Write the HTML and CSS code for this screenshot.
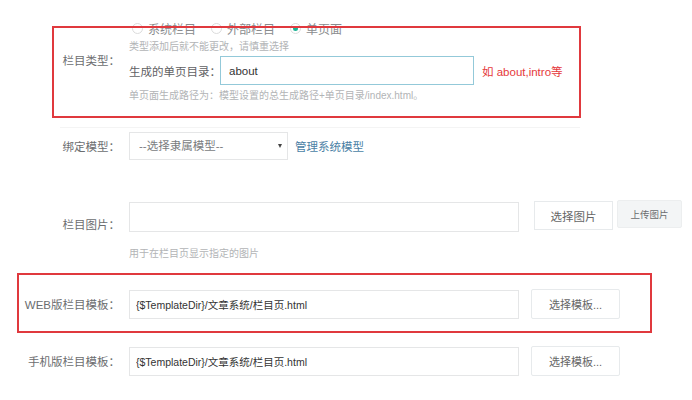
FILE: index.html
```html
<!DOCTYPE html>
<html lang="zh-CN">
<head>
    <meta charset="UTF-8">
    <title>栏目设置</title>
    <link rel="stylesheet" href="styles.css">
</head>
<body>
    <div class="page">
        <form class="col-form">
            <div class="row row-type">
                <label class="row-label">栏目类型<span class="colon">：</span></label>
                <div class="row-body">
                    <div class="radio-line">
                        <span class="radio"><i class="dot"></i>系统栏目</span>
                        <span class="radio"><i class="dot"></i>外部栏目</span>
                        <span class="radio"><i class="dot on"></i>单页面</span>
                    </div>
                    <div class="hint">类型添加后就不能更改，请慎重选择</div>
                    <div class="sub-row">
                        <span class="sub-label">生成的单页目录<span class="colon">：</span></span>
                        <input type="text" class="field field-focus" value="about">
                        <span class="red-note">如 about,intro等</span>
                    </div>
                    <div class="hint">单页面生成路径为<span class="colon">：</span>模型设置的总生成路径+单页目录/index.html。</div>
                </div>
            </div>

            <div class="line-dashed"></div>

            <div class="row row-model">
                <label class="row-label">绑定模型<span class="colon">：</span></label>
                <div class="select-wrap">
                    <select class="select">
                        <option>--选择隶属模型--</option>
                    </select>
                </div>
                <a class="link" href="#">管理系统模型</a>
            </div>

            <div class="row row-pic">
                <label class="row-label low">栏目图片<span class="colon">：</span></label>
                <input type="text" class="field field-wide">
                <button type="button" class="btn btn-pick">选择图片</button>
                <button type="button" class="btn btn-upload">上传图片</button>
            </div>
            <div class="hint hint-pic">用于在栏目页显示指定的图片</div>

            <div class="row row-tpl">
                <label class="row-label">WEB版栏目模板<span class="colon">：</span></label>
                <input type="text" class="field field-wide" value="{$TemplateDir}/文章系统/栏目页.html">
                <button type="button" class="btn btn-tpl">选择模板...</button>
            </div>

            <div class="row row-tpl row-mobile">
                <label class="row-label">手机版栏目模板<span class="colon">：</span></label>
                <input type="text" class="field field-wide" value="{$TemplateDir}/文章系统/栏目页.html">
                <button type="button" class="btn btn-tpl">选择模板...</button>
            </div>
        </form>

        <!-- 标注框 -->
        <div class="mark mark-type"></div>
        <div class="mark mark-web"></div>
    </div>
</body>
</html>
```

FILE: styles.css
```css
body {
    margin: 0;
    font-family: "Liberation Sans", "Noto Sans CJK SC", sans-serif;
    font-size: 11.5px;
    color: #676a6c;
    background-color: white;
}

.page {
    position: relative;
    width: 692px;
    height: 400px;
    overflow: hidden;
}

/* 冒号居中显示 */
.colon {
    font-family: "Noto Sans CJK TC", sans-serif;
}

.row {
    display: flex;
    align-items: center;
}

.row-label {
    width: 129px;
    padding-right: 9px;
    box-sizing: border-box;
    text-align: right;
    white-space: nowrap;
    color: #6b6d6f;
    line-height: 16px;
}

.row-label.low {
    margin-top: 16px;
}

.row-body {
    display: flex;
    flex-direction: column;
}

.row-type {
    padding-top: 18px;
}

.radio-line {
    display: flex;
    align-items: center;
    height: 20px;
    margin-left: 3px;
    color: #8a8c8e;
    font-size: 12px;
}

.radio {
    display: flex;
    align-items: center;
    margin-right: 15px;
}

.dot {
    width: 9px;
    height: 9px;
    border: 1px solid #dcdcdc;
    border-radius: 50%;
    margin-right: 5px;
    position: relative;
}

.dot.on::after {
    content: "";
    position: absolute;
    left: 2px;
    top: 2px;
    width: 5px;
    height: 5px;
    border-radius: 50%;
    background-color: #1ab394;
}

.hint {
    font-size: 10px;
    line-height: 14px;
    color: #b2b4b6;
    margin-top: 2px;
}

.sub-row {
    display: flex;
    align-items: center;
    margin-top: 2px;
}

.sub-row + .hint {
    margin-top: 3px;
}

.sub-label {
    width: 91px;
    white-space: nowrap;
    color: #5f6163;
}

.field {
    display: block;
    height: 29px;
    box-sizing: border-box;
    border: 1px solid #e5e6e7;
    padding: 0 6px;
    font-family: inherit;
    font-size: 10.5px;
    color: #333;
    outline: none;
}

.field-focus {
    width: 254px;
    border-color: #93c9d9;
    font-size: 11.5px;
    padding-left: 8px;
}

.red-note {
    margin-left: 8px;
    color: #e5383b;
}

.line-dashed {
    height: 0;
    border-top: 1px solid #f4f4f4;
    margin: 24px 0 0 60px;
    width: 520px;
}

.row-model {
    margin-top: 4px;
}

.select-wrap {
    position: relative;
}

.select-wrap::after {
    content: "";
    position: absolute;
    right: 6px;
    top: 12px;
    border-left: 2.5px solid transparent;
    border-right: 2.5px solid transparent;
    border-top: 4px solid #444;
}

.select {
    display: block;
    -webkit-appearance: none;
    appearance: none;
    width: 159px;
    height: 28px;
    margin: 0;
    border: 1px solid #e5e6e7;
    background-color: white;
    padding: 0 9px;
    font-family: inherit;
    font-size: 11.5px;
    color: #7a7c7e;
    border-radius: 0;
}

.link {
    margin-left: 7px;
    color: #4a7fa5;
    text-decoration: none;
}

.row-pic {
    margin-top: 40px;
}

.field-wide {
    width: 390px;
    height: 30px;
}

.btn {
    display: block;
    font-family: inherit;
    border: 1px solid #e7eaec;
    background-color: white;
    color: #666;
    cursor: pointer;
    padding: 0;
    margin-top: 0;
    margin-bottom: 0;
}

.btn-pick {
    width: 79px;
    height: 29px;
    margin-left: 15px;
    margin-top: -2px;
    font-size: 11.5px;
}

.btn-upload {
    width: 65px;
    height: 28px;
    margin-left: 4px;
    margin-top: -5px;
    font-size: 9.5px;
    background-color: #f3f5f6;
    border-color: #eceeef;
    border-radius: 2px;
    color: #6a6c6e;
}

.hint-pic {
    margin: 14px 0 0 129px;
}

.row-tpl {
    margin-top: 28px;
}

.row-tpl .field-wide {
    height: 29px;
}

.row-mobile {
    margin-top: 27px;
}

.btn-tpl {
    width: 89px;
    height: 30px;
    margin-left: 12px;
    font-size: 11px;
    border-radius: 2px;
}

.mark {
    position: absolute;
    border: 2px solid #e0393e;
    box-sizing: border-box;
}

.mark-type {
    left: 52px;
    top: 26px;
    width: 529px;
    height: 92px;
}

.mark-web {
    left: 17px;
    top: 273px;
    width: 635px;
    height: 60px;
}
```
